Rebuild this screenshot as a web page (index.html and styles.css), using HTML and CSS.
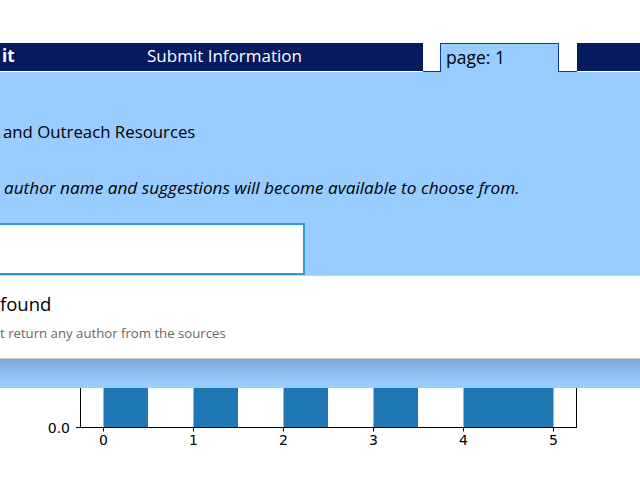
FILE: index.html
```html
<!DOCTYPE html>
<html>
<head>
<meta charset="utf-8">
<link rel="stylesheet" href="styles.css">
</head>
<body>
<div class="topgap"></div>
<nav class="tabs">
  <div class="nav-main">
    <span class="brand">it</span>
    <span class="nav-link">Submit Information</span>
  </div>
  <div class="tab-gap"></div>
  <div class="tab-active">page: 1</div>
  <div class="tab-gap wide"></div>
  <div class="nav-end"></div>
</nav>
<main class="panel">
  <h1 class="title">and Outreach Resources</h1>
  <p class="hint">author name and suggestions will become available to choose from.</p>
  <div class="search"></div>
  <div class="dropdown">
    <div class="dd-title">found</div>
    <div class="dd-sub">t return any author from the sources</div>
  </div>
  <div class="shadow"></div>
</main>
<section class="chart">
  <svg width="640" height="92" viewBox="0 0 640 92">
    <g stroke="#b0b0b0" stroke-width="1">
      <line x1="103.5" y1="0" x2="103.5" y2="39"/>
      <line x1="193.5" y1="0" x2="193.5" y2="39"/>
      <line x1="283.5" y1="0" x2="283.5" y2="39"/>
      <line x1="373.5" y1="0" x2="373.5" y2="39"/>
      <line x1="463.5" y1="0" x2="463.5" y2="39"/>
      <line x1="553.5" y1="0" x2="553.5" y2="39"/>
    </g>
    <g fill="#1f77b4">
      <rect x="104" y="0" width="44" height="39"/>
      <rect x="194" y="0" width="44" height="39"/>
      <rect x="284" y="0" width="44" height="39"/>
      <rect x="374" y="0" width="44" height="39"/>
      <rect x="464" y="0" width="89" height="39"/>
    </g>
    <g stroke="#000" stroke-width="1" fill="none">
      <line x1="80.5" y1="0" x2="80.5" y2="39.5"/>
      <line x1="576.5" y1="0" x2="576.5" y2="39.5"/>
      <line x1="80" y1="39.5" x2="577" y2="39.5"/>
      <line x1="76" y1="39.5" x2="80" y2="39.5"/>
      <line x1="103.5" y1="39.5" x2="103.5" y2="43.5"/>
      <line x1="193.5" y1="39.5" x2="193.5" y2="43.5"/>
      <line x1="283.5" y1="39.5" x2="283.5" y2="43.5"/>
      <line x1="373.5" y1="39.5" x2="373.5" y2="43.5"/>
      <line x1="463.5" y1="39.5" x2="463.5" y2="43.5"/>
      <line x1="553.5" y1="39.5" x2="553.5" y2="43.5"/>
    </g>
    <g font-family="DejaVu Sans, sans-serif" font-size="14" fill="#000" text-anchor="middle">
      <text x="103.5" y="57">0</text>
      <text x="193.5" y="57">1</text>
      <text x="283.5" y="57">2</text>
      <text x="373.5" y="57">3</text>
      <text x="463.5" y="57">4</text>
      <text x="553.5" y="57">5</text>
      <text x="70" y="44.5" text-anchor="end">0.0</text>
    </g>
  </svg>
</section>
</body>
</html>
```
FILE: styles.css
```css
html, body {
  margin: 0;
  padding: 0;
  overflow: hidden;
  width: 640px;
  height: 480px;
  background: #fff;
  font-family: "Open Sans", "Noto Sans", sans-serif;
}

.topgap {
  height: 43px;
}

.tabs {
  display: flex;
  height: 29px;
}

.nav-main {
  width: 423px;
  background: #061a5f;
  color: #fff;
  display: flex;
  align-items: center;
  font-size: 17px;
  white-space: nowrap;
  height: 28px;
  box-sizing: border-box;
  padding-bottom: 3px;
}

.brand {
  font-weight: bold;
  padding-left: 2px;
  width: 145px;
}

.nav-link {
  font-weight: normal;
}

.tab-gap {
  width: 17px;
  border-bottom: 1px solid #0b3a9e;
  box-sizing: border-box;
}

.tab-gap.wide {
  width: 18px;
}

.tab-active {
  width: 119px;
  box-sizing: border-box;
  border: 1px solid #0b3a9e;
  border-bottom: none;
  background: #99ccff;
  color: #000;
  font-size: 17.5px;
  padding: 0 0 3px 5px;
  display: flex;
  align-items: center;
}

.nav-end {
  flex: 1;
  background: #061a5f;
  height: 28px;
}

.panel {
  background: #99ccff;
  height: 316px;
  display: flex;
  flex-direction: column;
  white-space: nowrap;
}

.title {
  margin: 48px 0 0 0;
  font-size: 16.8px;
  font-weight: normal;
  line-height: 24px;
  padding-left: 3px;
  color: #000;
}

.hint {
  margin: 32px 0 0 0;
  font-size: 17.2px;
  font-style: italic;
  line-height: 24px;
  padding-left: 4px;
  color: #000;
}

.search {
  margin: 23px 0 0 -10px;
  width: 315px;
  height: 52px;
  box-sizing: border-box;
  border: 2px solid #3399cc;
  background: #fff;
}

.dropdown {
  background: #fff;
  border-top: 1px solid #cccccc;
  border-bottom: 1px solid #c8c8c8;
  height: 84px;
  box-sizing: border-box;
  display: flex;
  flex-direction: column;
}

.dd-title {
  font-size: 18.5px;
  line-height: 24px;
  margin-top: 16px;
  color: #000;
}

.dd-sub {
  font-size: 13.2px;
  line-height: 18px;
  margin-top: 8px;
  color: #666;
}

.shadow {
  flex: 1;
  background: linear-gradient(rgba(20, 40, 80, 0.22), rgba(20, 40, 80, 0) 24px);
}

.chart {
  height: 92px;
}

.chart svg {
  display: block;
}
```
